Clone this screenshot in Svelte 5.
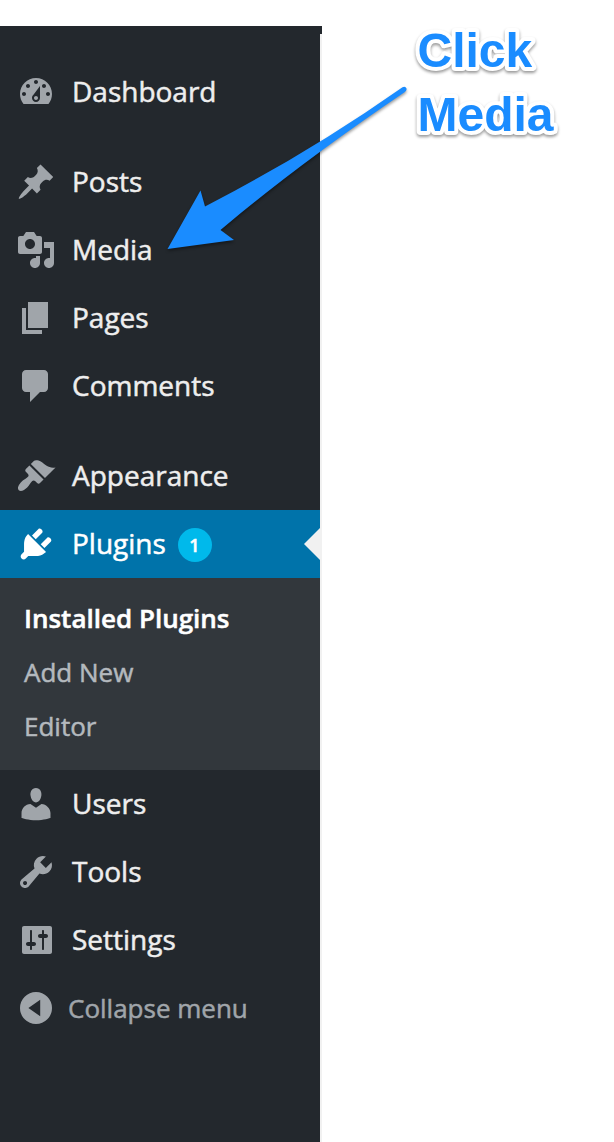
<script>
  const icons = {
    dashboard: 'M3.76 16h12.48c1.1-1.37 1.76-3.11 1.76-5 0-4.42-3.58-8-8-8s-8 3.58-8 8c0 1.89.66 3.63 1.76 5zM10 4c.55 0 1 .45 1 1s-.45 1-1 1-1-.45-1-1 .45-1 1-1zM6 6c.55 0 1 .45 1 1s-.45 1-1 1-1-.45-1-1 .45-1 1-1zm8 0c.55 0 1 .45 1 1s-.45 1-1 1-1-.45-1-1 .45-1 1-1zm-5.37 5.55L12 7v6c0 1.1-.9 2-2 2s-2-.9-2-2c0-.57.24-1.08.63-1.45zM4 10c.55 0 1 .45 1 1s-.45 1-1 1-1-.45-1-1 .45-1 1-1zm12 0c.55 0 1 .45 1 1s-.45 1-1 1-1-.45-1-1 .45-1 1-1zm-5 3c0-.55-.45-1-1-1s-1 .45-1 1 .45 1 1 1 1-.45 1-1z',
    posts: 'M10.44 3.02l1.82-1.82 6.36 6.35-1.83 1.82c-1.05-.68-2.48-.57-3.41.36l-.75.75c-.92.93-1.04 2.35-.35 3.41l-1.83 1.82-2.41-2.41-2.8 2.79c-.42.42-3.38 2.71-3.8 2.29s1.86-3.39 2.28-3.81l2.79-2.79L4.1 9.36l1.83-1.82c1.05.69 2.48.57 3.4-.36l.75-.75c.93-.92 1.05-2.35.36-3.41z',
    media: 'M13 11V4c0-.55-.45-1-1-1h-1.67L9 1H5L3.67 3H2c-.55 0-1 .45-1 1v7c0 .55.45 1 1 1h10c.55 0 1-.45 1-1zM7 4.5c1.38 0 2.5 1.12 2.5 2.5S8.38 9.5 7 9.5 4.5 8.38 4.5 7 5.62 4.5 7 4.5zM14 6h5v10.5c0 1.38-1.12 2.5-2.5 2.5S14 17.88 14 16.5s1.12-2.5 2.5-2.5c.17 0 .34.02.5.05V9h-3V6zm-4 8.05V13h2v3.5c0 1.38-1.12 2.5-2.5 2.5S7 17.88 7 16.5 8.12 14 9.5 14c.17 0 .34.02.5.05z',
    pages: 'M6 15V2h10v13H6zm-1 1h8v2H3V5h2v11z',
    comments: 'M5 2h9c1.1 0 2 .9 2 2v7c0 1.1-.9 2-2 2h-2l-5 5v-5H5c-1.1 0-2-.9-2-2V4c0-1.1.9-2 2-2z',
    appearance: 'M14.48 11.06L7.41 3.99l1.5-1.5c.5-.56 2.3-.47 3.51.32 1.21.8 1.43 1.28 2.91 2.1 1.18.64 2.45 1.26 4.45.85zm-.71.71L6.7 4.7 4.93 6.47c-.39.39-.39 1.02 0 1.41l1.06 1.06c.39.39.39 1.03 0 1.42-.6.6-1.43 1.11-2.21 1.69-.35.26-.7.53-1.01.84C1.43 14.23.4 16.08 1.4 17.07c.99 1 2.84-.03 4.18-1.36.31-.31.58-.66.85-1.02.57-.78 1.08-1.61 1.69-2.21.39-.39 1.02-.39 1.41 0l1.06 1.06c.39.39 1.02.39 1.41 0z',
    plugins: 'M13.11 4.36L9.87 7.6 8 5.73l3.24-3.24c.35-.34 1.05-.2 1.56.32.52.51.66 1.21.31 1.55zm-8 1.77l.91-1.12 9.01 9.01-1.19.84c-.71.71-2.63 1.16-3.82 1.16H6.14L4.9 17.26c-.59.59-1.54.59-2.12 0-.59-.58-.59-1.53 0-2.12l1.24-1.24v-3.88c0-1.13.4-3.19 1.09-3.89zm7.26 3.97l3.24-3.24c.34-.35 1.04-.21 1.55.31.52.51.66 1.21.31 1.55l-3.24 3.25z',
    users: 'M10 9.25c-2.27 0-2.73-3.44-2.73-3.44C7 4.02 7.82 2 9.97 2c2.16 0 2.98 2.02 2.71 3.81 0 0-.41 3.44-2.68 3.44zm0 2.57L12.72 10c2.39 0 4.52 2.33 4.52 4.53v2.49s-3.65 1.13-7.24 1.13c-3.65 0-7.24-1.13-7.24-1.13v-2.49c0-2.25 1.94-4.48 4.47-4.48z',
    tools: 'M16.68 9.77c-1.34 1.34-3.3 1.67-4.95.99l-5.41 6.52c-.99.99-2.59.99-3.58 0s-.99-2.59 0-3.57l6.52-5.42c-.68-1.65-.35-3.61.99-4.95 1.28-1.28 3.12-1.62 4.72-1.06l-2.89 2.89 2.82 2.82 2.86-2.87c.53 1.58.18 3.39-1.08 4.65zM3.81 16.21c.4.39 1.04.39 1.43 0 .4-.4.4-1.04 0-1.43-.39-.4-1.03-.4-1.43 0-.39.39-.39 1.03 0 1.43z',
    settings: 'M18 16V4c0-.55-.45-1-1-1H4c-.55 0-1 .45-1 1v12c0 .55.45 1 1 1h13c.55 0 1-.45 1-1zM8 11h1c.55 0 1 .45 1 1s-.45 1-1 1H8v1.5c0 .28-.22.5-.5.5s-.5-.22-.5-.5V13H6c-.55 0-1-.45-1-1s.45-1 1-1h1V5.5c0-.28.22-.5.5-.5s.5.22.5.5V11zm5-2h-1c-.55 0-1-.45-1-1s.45-1 1-1h1V5.5c0-.28.22-.5.5-.5s.5.22.5.5V7h1c.55 0 1 .45 1 1s-.45 1-1 1h-1v5.5c0 .28-.22.5-.5.5s-.5-.22-.5-.5V9z',
    collapse: 'M10 2a8 8 0 1 0 0 16 8 8 0 0 0 0-16zM12.1 14.1L6.2 10l5.9-4.1z'
  };

  const groups = [
    [{ icon: 'dashboard', label: 'Dashboard' }],
    [
      { icon: 'posts', label: 'Posts' },
      { icon: 'media', label: 'Media' },
      { icon: 'pages', label: 'Pages' },
      { icon: 'comments', label: 'Comments' }
    ],
    [
      { icon: 'appearance', label: 'Appearance' },
      { icon: 'plugins', label: 'Plugins', count: 1, submenu: ['Installed Plugins', 'Add New', 'Editor'] },
      { icon: 'users', label: 'Users' },
      { icon: 'tools', label: 'Tools' },
      { icon: 'settings', label: 'Settings' },
      { icon: 'collapse', label: 'Collapse menu', muted: true }
    ]
  ];
</script>

<div class="page">
  <div class="adminbar"></div>
  <nav class="sidebar">
    {#each groups as group}
      <ul class="group">
        {#each group as item}
          <li>
            <div class="row" class:active={item.submenu} class:muted={item.muted}>
              <svg class="icon" viewBox="0 0 20 20"><path fill-rule="evenodd" d={icons[item.icon]} /></svg>
              <span class="label">{item.label}</span>
              {#if item.count}<span class="badge">{item.count}</span>{/if}
            </div>
            {#if item.submenu}
              <ul class="submenu">
                {#each item.submenu as sub, i}
                  <li class:current={i === 0}>{sub}</li>
                {/each}
              </ul>
            {/if}
          </li>
        {/each}
      </ul>
    {/each}
  </nav>

  <svg class="annotation" viewBox="0 0 614 300">
    <path d="M167.5 249L200.5 190.5L205 206.5Q309 153 402.5 87.2Q405.5 85.8 406.5 88.5Q407 90.5 404.5 92.3Q300 163 220.5 230L234 240Z" />
    <g class="callout">
      <text x="417.5" y="67">Click</text>
      <text x="417.5" y="131">Media</text>
    </g>
  </svg>
</div>

<style>
  :global(body) { margin: 0; background: #fff; }
  .page {
    position: relative;
    box-sizing: border-box;
    width: 614px;
    height: 1142px;
    padding-top: 26px;
    overflow: hidden;
    background: #fff;
    font-family: "Open Sans", sans-serif;
  }
  .adminbar { width: 322px; height: 8px; background: #23282d; }
  .sidebar {
    box-sizing: border-box;
    width: 322px;
    height: 1108px;
    padding-top: 24px;
    background: #23282d;
    border-right: 2px solid #f1f1f1;
    -webkit-text-stroke: 0.5px currentColor;
  }
  ul { list-style: none; margin: 0; padding: 0; }
  .group + .group { margin-top: 22px; }
  .row {
    display: flex;
    align-items: center;
    height: 68px;
    padding-left: 16px;
    color: #eee;
    font-size: 28px;
    line-height: 36px;
    white-space: nowrap;
  }
  .icon { width: 40px; height: 40px; margin-right: 16px; fill: #a0a5aa; }
  .label { padding-bottom: 2px; }
  .active {
    position: relative;
    background: #0073aa;
    color: #fff;
  }
  .active::after {
    content: "";
    position: absolute;
    right: 0;
    top: 18px;
    border: 16px solid transparent;
    border-left-width: 0;
    border-right-color: #f1f1f1;
  }
  .active .icon { fill: #fff; }
  .badge {
    box-sizing: border-box;
    width: 34px;
    height: 34px;
    margin: 2px 0 0 12px;
    padding-right: 1px;
    border-radius: 50%;
    background: #00b9eb;
    font-size: 18px;
    font-weight: 600;
    line-height: 34px;
    text-align: center;
  }
  .muted { color: #a0a5aa; font-size: 26px; }
  .muted .icon { margin-right: 12px; }
  .muted .label { padding-bottom: 0; }
  .submenu {
    box-sizing: border-box;
    height: 192px;
    padding: 13px 24px;
    background: #32373c;
    color: #b4b9be;
    font-size: 26px;
    line-height: 54px;
  }
  .current { color: #fff; font-weight: 600; }
  .annotation {
    position: absolute;
    left: 0;
    top: 0;
    width: 614px;
    height: 300px;
    fill: #1a8cff;
    filter: drop-shadow(0 2px 1.5px rgba(0, 0, 0, 0.4));
  }
  .callout {
    font: bold 48px "Liberation Sans", sans-serif;
    stroke: #fff;
    stroke-width: 8px;
    stroke-linejoin: round;
    paint-order: stroke fill;
  }
</style>
